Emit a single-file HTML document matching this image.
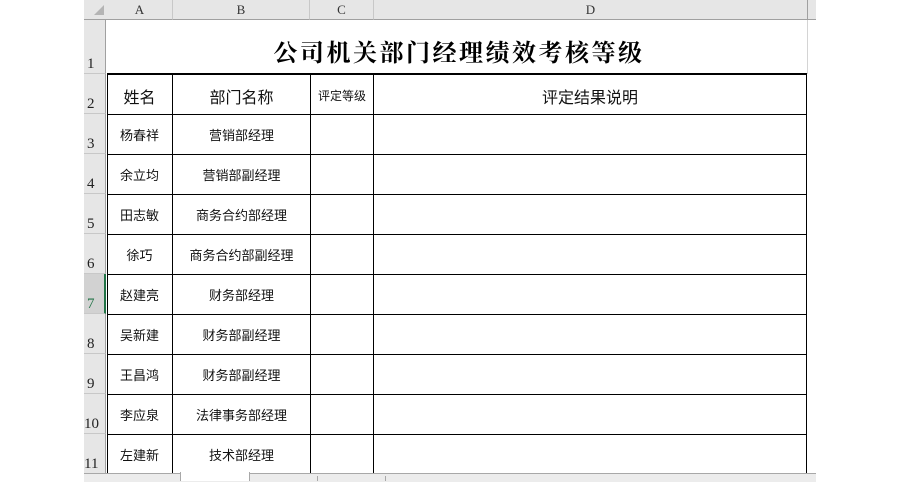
<!DOCTYPE html>
<html><head><meta charset="utf-8"><style>
body{margin:0;width:900px;height:481px;background:#fff;position:relative;overflow:hidden;font-family:"Liberation Sans","Noto Sans CJK SC",sans-serif}
.a{position:absolute}
.ch{background:#e6e6e6;top:0;height:19px;border-bottom:1px solid #a0a0a0;font-family:"Liberation Serif","Noto Serif CJK SC",serif;font-size:13px;text-align:center;line-height:20px;color:#333}
.rh{background:#e6e6e6;left:84px;width:22px;border-right:1px solid #a0a0a0;border-bottom:1px solid #c8c8c8;font-family:"Liberation Serif",serif;font-size:15px;color:#222;box-sizing:border-box}
.rh span{position:absolute;left:3px;bottom:0px}
.t{font-size:13px;text-align:center;color:#111}
.hl{background:#000;height:1px;left:107px;width:700px}
.vl{background:#000;width:1px}
</style></head><body>
<div class="a ch" style="left:84px;width:23px"><div class="a" style="left:10px;top:5px;width:0;height:0;border-left:10px solid transparent;border-bottom:10px solid #b4b4b4"></div></div>
<div class="a ch" style="left:107px;width:65px;border-right:1px solid #c8c8c8">A</div>
<div class="a ch" style="left:173px;width:136px;border-right:1px solid #c8c8c8">B</div>
<div class="a ch" style="left:310px;width:63px;border-right:1px solid #c8c8c8">C</div>
<div class="a ch" style="left:374px;width:433px;border-right:1px solid #a0a0a0">D</div>
<div class="a ch" style="left:808px;width:8px"></div>
<div class="a" style="left:807px;top:20px;width:1px;height:54px;background:#d4d4d4"></div>

<div class="a rh" style="top:20px;height:54px"><span>1</span></div>
<div class="a rh" style="top:74px;height:40px"><span>2</span></div>
<div class="a rh" style="top:114px;height:40px"><span>3</span></div>
<div class="a rh" style="top:154px;height:40px"><span>4</span></div>
<div class="a rh" style="top:194px;height:40px"><span>5</span></div>
<div class="a rh" style="top:234px;height:40px"><span>6</span></div>
<div class="a rh" style="top:274px;height:40px;background:#d2d2d2;border-right:2px solid #217346;color:#217346"><span>7</span></div>
<div class="a rh" style="top:314px;height:40px"><span>8</span></div>
<div class="a rh" style="top:354px;height:40px"><span>9</span></div>
<div class="a rh" style="top:394px;height:40px"><span style="left:0">10</span></div>
<div class="a rh" style="top:434px;height:40px"><span style="left:0">11</span></div>

<div class="a" style="left:109px;top:33px;width:700px;text-align:center;font-family:'Liberation Serif','Noto Serif CJK SC',serif;font-weight:bold;font-size:24px;letter-spacing:2.5px;color:#000">公司机关部门经理绩效考核等级</div>

<div class="a hl" style="top:73px;height:2px"></div>
<div class="a hl" style="top:114px"></div><div class="a hl" style="top:154px"></div>
<div class="a hl" style="top:194px"></div><div class="a hl" style="top:234px"></div>
<div class="a hl" style="top:274px"></div><div class="a hl" style="top:314px"></div>
<div class="a hl" style="top:354px"></div><div class="a hl" style="top:394px"></div>
<div class="a hl" style="top:434px"></div>
<div class="a vl" style="left:107px;top:74px;height:400px"></div>
<div class="a vl" style="left:172px;top:74px;height:400px"></div>
<div class="a vl" style="left:310px;top:74px;height:400px"></div>
<div class="a vl" style="left:373px;top:74px;height:400px"></div>
<div class="a vl" style="left:806px;top:74px;height:400px"></div>

<div class="a t" style="left:107px;width:65px;top:84px;font-size:16px">姓名</div>
<div class="a t" style="left:173px;width:137px;top:84px;font-size:16px">部门名称</div>
<div class="a t" style="left:311px;width:62px;top:87px;font-size:12px">评定等级</div>
<div class="a t" style="left:374px;width:432px;top:84px;font-size:16px">评定结果说明</div>

<div class="a t" style="left:107px;width:65px;top:125px">杨春祥</div><div class="a t" style="left:173px;width:137px;top:125px">营销部经理</div>
<div class="a t" style="left:107px;width:65px;top:165px">余立均</div><div class="a t" style="left:173px;width:137px;top:165px">营销部副经理</div>
<div class="a t" style="left:107px;width:65px;top:205px">田志敏</div><div class="a t" style="left:173px;width:137px;top:205px">商务合约部经理</div>
<div class="a t" style="left:107px;width:65px;top:245px">徐巧</div><div class="a t" style="left:173px;width:137px;top:245px">商务合约部副经理</div>
<div class="a t" style="left:107px;width:65px;top:285px">赵建亮</div><div class="a t" style="left:173px;width:137px;top:285px">财务部经理</div>
<div class="a t" style="left:107px;width:65px;top:325px">吴新建</div><div class="a t" style="left:173px;width:137px;top:325px">财务部副经理</div>
<div class="a t" style="left:107px;width:65px;top:365px">王昌鸿</div><div class="a t" style="left:173px;width:137px;top:365px">财务部副经理</div>
<div class="a t" style="left:107px;width:65px;top:405px">李应泉</div><div class="a t" style="left:173px;width:137px;top:405px">法律事务部经理</div>
<div class="a t" style="left:107px;width:65px;top:445px">左建新</div><div class="a t" style="left:173px;width:137px;top:445px">技术部经理</div>

<div class="a" style="left:84px;top:473px;width:732px;height:8px;background:#ececec;border-top:1px solid #a8a8a8"></div>
<div class="a" style="left:180px;top:472px;width:68px;height:9px;background:#fff;border-left:1px solid #a8a8a8;border-right:1px solid #a8a8a8"></div>
<div class="a" style="left:317px;top:476px;width:1px;height:5px;background:#a8a8a8"></div>
<div class="a" style="left:385px;top:476px;width:1px;height:5px;background:#a8a8a8"></div>
</body></html>
